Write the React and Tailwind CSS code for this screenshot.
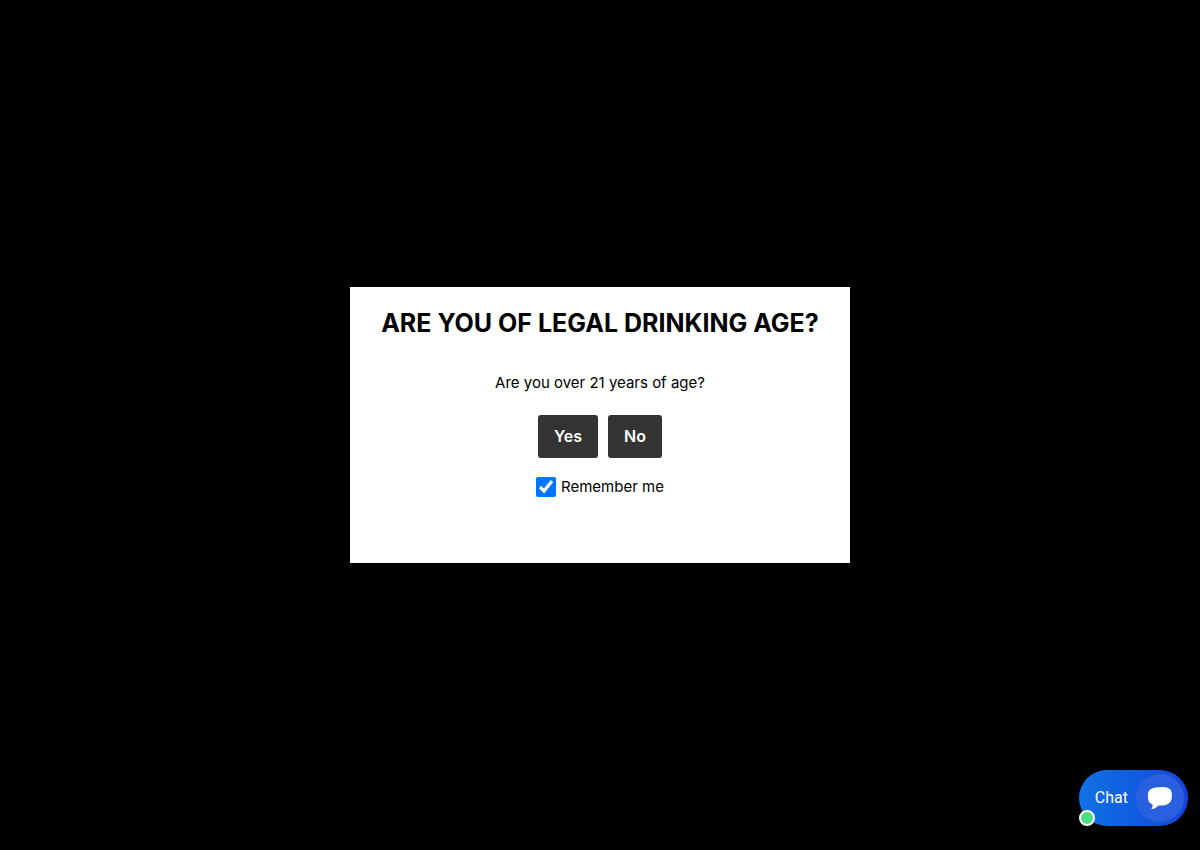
import { useState } from "react";

function ChatButton() {
  return (
    <button
      type="button"
      className="fixed right-3 bottom-6 flex h-14 items-center gap-2 rounded-full bg-linear-to-r from-[#1272e4] to-[#1643dc] pr-1 pl-4 font-[Roboto,sans-serif] text-base text-white"
    >
      Chat
      <span className="flex size-12 items-center justify-center rounded-full bg-[#2a60e0]">
        <svg viewBox="0 0 26 24" className="h-6 w-[26px]" fill="currentColor">
          <path d="M13 1.2C18 .7 22 1.500 23.800 4.200C25.300 6.500 25.300 12 23.800 15C22.300 18.200 18.500 19.500 14 19.600L11.500 19.500C9.800 21.500 7.200 23 4.300 22.900C5.300 21.700 5.900 20.200 5.500 18.500C3.300 17.800 1.600 16 1.200 13.500C.7 10.500 .8 7.500 1.700 5.300C3.200 2.200 7.500 1.200 13 1.200Z" />
        </svg>
      </span>
      <span className="absolute bottom-0 left-0 size-4 rounded-full border-2 border-white bg-[#4ade80]" />
    </button>
  );
}

function App() {
  const [remember, setRemember] = useState(true);

  return (
    <div className="flex min-h-screen items-center justify-center bg-black font-[Inter,sans-serif] text-black">
      <main className="flex w-full max-w-[500px] flex-col items-center bg-white px-5 pt-5 pb-16 text-center">
        <h1 className="text-[25px] leading-8 font-bold uppercase">
          Are you of legal drinking age?
        </h1>
        <p className="mt-8 text-[15px] leading-6">
          Are you over 21 years of age?
        </p>

        <div className="mt-5 flex gap-[10px]">
          <button
            type="button"
            className="rounded-[3px] bg-[#333333] px-4 py-[10px] text-base leading-[23px] font-semibold text-white"
          >
            Yes
          </button>
          <button
            type="button"
            className="rounded-[3px] bg-[#333333] px-4 py-[10px] text-base leading-[23px] font-semibold text-white"
          >
            No
          </button>
        </div>

        <label className="mt-[17px] flex items-center gap-[5px] text-[15px] leading-6">
          <input
            type="checkbox"
            checked={remember}
            onChange={(e) => setRemember(e.target.checked)}
            className="size-5"
          />
          Remember me
        </label>
      </main>

      <ChatButton />
    </div>
  );
}

export default App;
